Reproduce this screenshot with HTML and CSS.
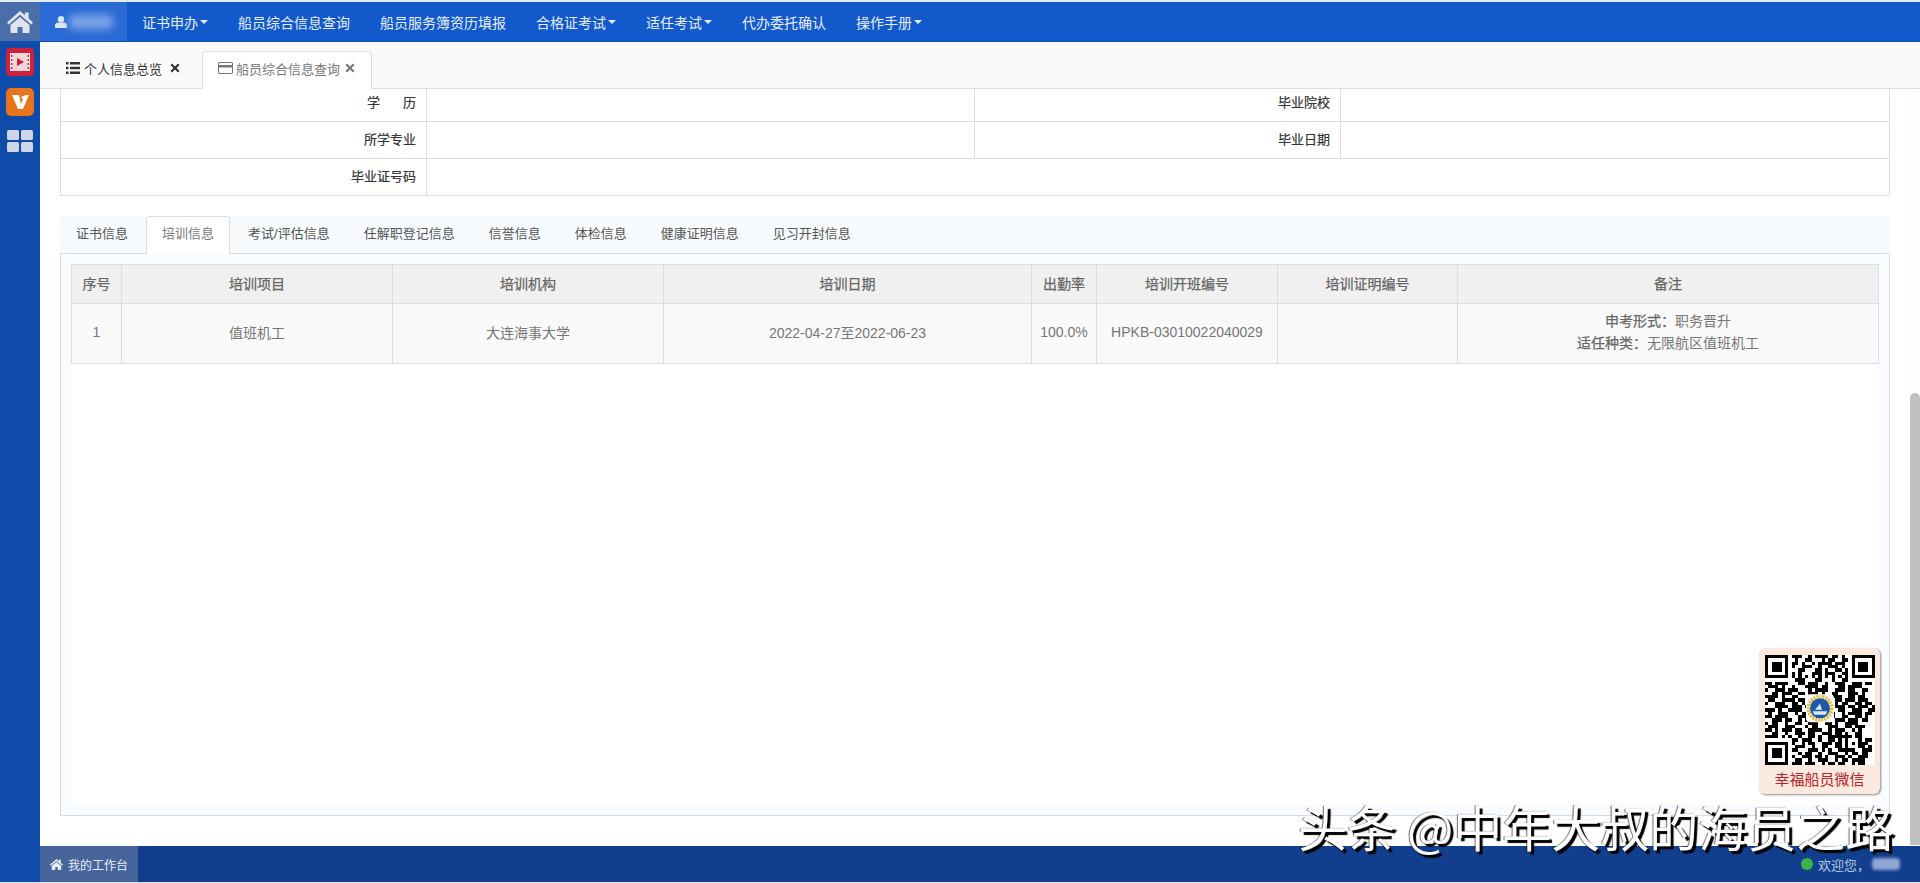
FILE: index.html
```html
<!DOCTYPE html>
<html lang="zh-CN">
<head>
<meta charset="utf-8">
<title>船员综合信息查询</title>
<link rel="stylesheet" href="styles.css">
</head>
<body>
<div class="app">
  <header class="topbar">
    <a class="home-btn"><svg class="home-ico" viewBox="0 0 26 22"><path d="M13 0 L18 4.2V1.5h3.6v6L26 11.4l-1.7 2L13 3.8 1.7 13.400 0 11.400z"/><path d="M13 6 L22.500 14v8h-7v-6h-5v6h-7v-8z"/></svg></a>
    <a class="user-btn"><svg class="user-ico" viewBox="0 0 12 12"><circle cx="6" cy="3.200" r="3.200"/><path d="M0 12V9.500C0 7.500 1.500 6.500 3 6.500h6c1.500 0 3 1 3 3V12z"/></svg><span class="blur-name"></span></a>
    <nav class="nav">
      <a class="nav-item">证书申办<i class="caret"></i></a>
      <a class="nav-item">船员综合信息查询</a>
      <a class="nav-item">船员服务簿资历填报</a>
      <a class="nav-item">合格证考试<i class="caret"></i></a>
      <a class="nav-item">适任考试<i class="caret"></i></a>
      <a class="nav-item">代办委托确认</a>
      <a class="nav-item">操作手册<i class="caret"></i></a>
    </nav>
  </header>
  <div class="body-row">
    <aside class="sidebar">
      <svg class="side-ico" viewBox="0 0 28 28"><rect width="28" height="28" rx="4" fill="#d0213c"/><rect x="4" y="5" width="20" height="18" fill="#f6e6e8"/><path d="M7 5h14v18H7z" fill="#f3d6da"/><path d="M11 10l7 4-7 4z" fill="#c4202f"/><path d="M5 7h1.500v2H5zM5 11h1.500v2H5zM5 15h1.500v2H5zM5 19h1.500v2H5zM21.500 7H23v2h-1.500zM21.500 11H23v2h-1.500zM21.500 15H23v2h-1.500zM21.500 19H23v2h-1.500z" fill="#c4202f"/></svg>
      <svg class="side-ico" viewBox="0 0 28 28"><rect width="28" height="28" rx="5" fill="#e8741c"/><path d="M6 7h7l2 9 2-5-2-2 5-2h3l-6 14h-5z" fill="#fff"/></svg>
      <svg class="side-grid" viewBox="0 0 26 22"><rect width="12" height="10" rx="1.500"/><rect x="14" width="12" height="10" rx="1.500"/><rect y="12" width="12" height="10" rx="1.500"/><rect x="14" y="12" width="12" height="10" rx="1.500"/></svg>
    </aside>
    <div class="main">
      <div class="page-tabs">
        <div class="page-tab">
          <svg class="tab-ico" viewBox="0 0 14 12"><path d="M0 0h2.500v2.500H0zM4 0h10v2.500H4zM0 4.700h2.500v2.500H0zM4 4.700h10v2.500H4zM0 9.400h2.500v2.500H0zM4 9.400h10v2.500H4z"/></svg>
          <span>个人信息总览</span>
          <svg class="tab-x" viewBox="0 0 10 10"><path d="M2 .5L5 3.500 8 .5 9.500 2 6.500 5l3 3L8 9.500l-3-3-3 3L.5 8l3-3-3-3z"/></svg>
        </div>
        <div class="page-tab active">
          <svg class="tab-ico card" viewBox="0 0 15 12"><path d="M1.500 0h12A1.500 1.500 0 0 1 15 1.500v9a1.500 1.500 0 0 1-1.500 1.500h-12A1.500 1.500 0 0 1 0 10.500v-9A1.500 1.500 0 0 1 1.500 0zM1 5.500V10.500c0 .3.200.5.500.5h12c.3 0 .5-.2.500-.5V5.500zM1 1.500V3h13V1.500c0-.3-.2-.5-.5-.5h-12c-.3 0-.5.200-.5.500z"/></svg>
          <span>船员综合信息查询</span>
          <svg class="tab-x" viewBox="0 0 10 10"><path d="M2 .5L5 3.500 8 .5 9.500 2 6.500 5l3 3L8 9.500l-3-3-3 3L.5 8l3-3-3-3z"/></svg>
        </div>
      </div>
      <div class="content">
        <table class="info">
          <colgroup><col class="c-label"><col class="c-val"><col class="c-label"><col></colgroup>
          <tr class="row-first"><th>学&emsp;&ensp;&nbsp;历</th><td></td><th>毕业院校</th><td></td></tr>
          <tr><th>所学专业</th><td></td><th>毕业日期</th><td></td></tr>
          <tr><th>毕业证号码</th><td colspan="3"></td></tr>
        </table>
        <div class="panel">
          <ul class="tabs">
            <li>证书信息</li>
            <li class="active">培训信息</li>
            <li>考试/评估信息</li>
            <li>任解职登记信息</li>
            <li>信誉信息</li>
            <li>体检信息</li>
            <li>健康证明信息</li>
            <li>见习开封信息</li>
          </ul>
          <div class="panel-body">
            <div class="panel-inner">
              <table class="data">
                <colgroup><col class="d1"><col class="d2"><col class="d2"><col class="d4"><col class="d5"><col class="d6"><col class="d7"><col></colgroup>
                <thead><tr><th>序号</th><th>培训项目</th><th>培训机构</th><th>培训日期</th><th>出勤率</th><th>培训开班编号</th><th>培训证明编号</th><th>备注</th></tr></thead>
                <tbody><tr><td>1</td><td>值班机工</td><td>大连海事大学</td><td>2022-04-27至2022-06-23</td><td>100.0%</td><td>HPKB-03010022040029</td><td></td><td class="remark"><b>申考形式：</b>职务晋升<br><b>适任种类：</b>无限航区值班机工</td></tr></tbody>
              </table>
            </div>
          </div>
        </div>
        <div class="scrollbar"><div class="thumb"></div></div>
      </div>
      <footer class="footer">
        <div class="work-tab"><svg class="work-ico" viewBox="0 0 26 22"><path d="M13 0 L18 4.200V1.500h3.600v6L26 11.400l-1.700 2L13 3.800 1.700 13.400 0 11.400z"/><path d="M13 6 L22.500 14v8h-7v-6h-5v6h-7v-8z"/></svg><span>我的工作台</span></div>
        <div class="status"><i class="dot"></i><span>欢迎您，</span><span class="blur-name small"></span></div>
      </footer>
    </div>
  </div>
  <div class="bottom-strip"></div>

  <div class="qr-card">
    <svg class="qr" viewBox="0 0 33 33" shape-rendering="crispEdges">
      <path fill-rule="evenodd" d="M0 0h7v7H0zM1 1v5h5V1zM2 2h3v3H2zM26 0h7v7h-7zM27 1v5h5V1zM28 2h3v3h-3zM0 26h7v7H0zM1 27v5h5v-5zM2 28h3v3H2z"/>
      <path stroke="#000" stroke-width="1" fill="none" d="M8 .5h3m2 0h1m1 0h4m1 0h2m1 0h1
M9 1.500h1m2 0h2m3 0h1m1 0h2m2 0h2
M8 2.500h2m1 0h1m2 0h1m1 0h4m1 0h3
M8 3.500h1m2 0h3m2 0h1m2 0h3m1 0h1
M10 4.500h2m3 0h2m1 0h1m2 0h2m1 0h1
M8 5.500h1m1 0h1m3 0h3m1 0h3m2 0h2
M8 6.500h1m1 0h1m1 0h1m1 0h1m1 0h1m1 0h1m1 0h1m1 0h1m1 0h1
M9 7.500h3m3 0h2m3 0h1m2 0h2
M0 8.500h2m1 0h4m3 0h2m1 0h3m2 0h1m2 0h3m2 0h3m1 0h2
M1 9.500h3m1 0h1m2 0h1m3 0h4m1 0h2m3 0h2m1 0h4
M0 10.500h1m2 0h3m1 0h3m3 0h1m1 0h4m2 0h3m1 0h2m2 0h2
M2 11.500h2m1 0h3m2 0h2m1 0h3m1 0h1m2 0h2m3 0h3m1 0h1
M0 12.500h4m1 0h1m2 0h2m3 0h3m3 0h4m2 0h2m1 0h2
M1 13.500h2m2 0h4m1 0h2m9 0h2m1 0h3m1 0h3
M0 14.500h1m2 0h3m2 0h2m1 0h1m9 0h1m1 0h2m2 0h2m1 0h2
M3 15.500h4m1 0h3m1 0h1m8 0h3m1 0h2m1 0h3m1 0h1
M0 16.500h3m1 0h1m2 0h4m2 0h1m8 0h2m2 0h3m2 0h2
M1 17.500h1m2 0h3m2 0h1m1 0h2m7 0h1m2 0h1m1 0h4m1 0h2
M0 18.500h2m1 0h4m3 0h3m5 0h3m2 0h2m2 0h2m1 0h1
M2 19.500h3m1 0h2m2 0h1m1 0h2m2 0h4m1 0h3m1 0h3m1 0h2
M0 20.500h1m1 0h2m2 0h1m2 0h2m2 0h3m2 0h2m1 0h1m2 0h4
M1 21.500h3m2 0h3m3 0h1m1 0h2m3 0h3m2 0h2m1 0h3
M0 22.500h2m1 0h1m1 0h3m1 0h2m2 0h4m2 0h1m1 0h3m2 0h1m1 0h1
M2 23.500h2m2 0h1m2 0h3m1 0h2m2 0h3m1 0h2m1 0h1m2 0h2
M0 24.500h4m1 0h1m1 0h1m2 0h1m2 0h2m1 0h1m2 0h7m1 0h2
M8 25.500h2m1 0h3m2 0h1m2 0h2m1 0h1m1 0h1m3 0h1m1 0h2
M8 26.500h1m2 0h1m1 0h2m2 0h3m1 0h2m1 0h1m1 0h1m1 0h3
M9 27.500h3m2 0h1m2 0h2m2 0h2m1 0h1m3 0h2m1 0h1
M8 28.500h2m3 0h3m1 0h1m1 0h1m2 0h5m2 0h3
M10 29.500h1m1 0h2m2 0h1m2 0h3m2 0h1m1 0h2m1 0h2
M8 30.500h1m2 0h3m1 0h2m1 0h1m2 0h3m1 0h1m2 0h3
M9 31.500h2m2 0h1m2 0h3m2 0h1m1 0h2m1 0h4
M8 32.500h3m1 0h3m2 0h1m1 0h2m1 0h2m2 0h1m1 0h2"/>
      <g shape-rendering="auto">
        <rect x="12.300" y="11.800" width="8.400" height="8.400" rx="1.200" fill="#fff"/>
        <circle cx="16.500" cy="16" r="3.500" fill="none" stroke="#e4b93e" stroke-width="1.100" stroke-dasharray=".6 .3"/>
        <circle cx="16.500" cy="16" r="3" fill="#1d5aa8"/>
        <path d="M15 16.400l1.500-1.800 .6 1.800zM14.300 16.900h4.400l-.5 1h-3.400z" fill="#dfe8f2"/>
      </g>
    </svg>
    <div class="qr-label">幸福船员微信</div>
  </div>
  <div class="watermark">头条 @中年大叔的海员之路</div>
</div>
</body>
</html>
```
FILE: styles.css
```css
* { box-sizing: border-box; }
html, body { margin: 0; padding: 0; height: 100%; overflow: hidden; }
body {
  font-family: "Liberation Sans", "Noto Sans CJK SC", sans-serif;
  font-size: 13px;
  color: #333;
  background: #fff;
}
.app {
  position: relative;
  display: flex;
  flex-direction: column;
  height: 883px;
  padding-top: 2px;
  background: #e4ecf8;
}

/* top bar */
.topbar {
  display: flex;
  height: 40px;
  flex: none;
  background: #1259cc;
  border-bottom: 1px solid #0f4fb4;
}
.home-btn {
  display: flex;
  align-items: center;
  justify-content: center;
  width: 40px;
  background: #4a6ea9;
}
.home-ico { width: 26px; height: 22px; fill: #dfe4ee; }
.user-btn {
  display: flex;
  align-items: center;
  width: 87px;
  padding-left: 15px;
  background: #2a6ad4;
}
.user-ico { width: 12px; height: 12px; fill: #dfe7f6; flex: none; }
.blur-name {
  display: block;
  width: 44px;
  height: 14px;
  margin-left: 2px;
  background: #7fa6ea;
  border-radius: 4px;
  filter: blur(4px);
}
.nav { display: flex; }
.nav-item {
  display: flex;
  align-items: center;
  padding: 0 15px;
  color: #e8eef9;
  font-size: 14px;
  white-space: nowrap;
}
.caret {
  display: block;
  margin-left: 2px;
  border-top: 4px solid #e8eef9;
  border-left: 4px solid transparent;
  border-right: 4px solid transparent;
  margin-top: 1px;
}

/* body */
.body-row { display: flex; flex: 1; min-height: 0; }
.sidebar {
  display: flex;
  flex-direction: column;
  align-items: center;
  flex: none;
  width: 40px;
  padding-top: 6px;
  background: #0f4ba8;
}
.side-ico { display: block; width: 28px; height: 28px; margin-bottom: 12px; }
.side-grid { display: block; width: 26px; height: 22px; margin-top: 2px; fill: #cdd6e8; }
.main { display: flex; flex-direction: column; flex: 1; min-width: 0; background: #fff; }

/* page tabs */
.page-tabs {
  display: flex;
  align-items: flex-end;
  flex: none;
  height: 47px;
  padding-left: 10px;
  background: #fafafa;
  border-bottom: 1px solid #ddd;
}
.page-tab {
  display: flex;
  align-items: center;
  height: 37px;
  margin-bottom: -1px;
  padding: 0 21px 5px 15px;
  color: #333;
  border: 1px solid transparent;
  white-space: nowrap;
}
.page-tab.active {
  height: 38px;
  padding: 0 16px 4px 15px;
  color: #777;
  background: #fff;
  border-color: #ddd #ddd #fff;
  border-radius: 4px 4px 0 0;
}
.tab-ico { width: 14px; height: 12px; margin-right: 4px; fill: #333; flex: none; }
.tab-ico.card { width: 15px; margin-right: 3px; fill: #777; }
.tab-x { width: 10px; height: 10px; margin-left: 8px; fill: #333; flex: none; }
.active .tab-x { margin-left: 5px; fill: #777; }

/* content */
.content {
  position: relative;
  display: flex;
  flex-direction: column;
  flex: 1;
  min-height: 0;
  padding: 0 30px 30px 20px;
}
.info {
  flex: none;
  width: 100%;
  table-layout: fixed;
  border-collapse: collapse;
}
.info th, .info td {
  height: 37px;
  padding: 0 10px 3px;
  border: 1px solid #ddd;
  font-weight: 400;
}
.info .row-first th, .info .row-first td { height: 32px; padding-bottom: 6px; border-top: 0; }
.info th { text-align: right; color: #333; -webkit-text-stroke: .2px #333; }
.c-label { width: 366px; }
.c-val { width: 548px; }

.panel { display: flex; flex-direction: column; flex: 1; min-height: 0; margin-top: 20px; }
.tabs {
  display: flex;
  flex: none;
  height: 38px;
  margin: 0;
  padding: 0;
  list-style: none;
  background: #f7fbfe;
  border-bottom: 1px solid #ddd;
}
.tabs li {
  height: 38px;
  padding: 0 15px;
  line-height: 33px;
  margin-right: 2px;
  color: #555;
  border: 1px solid transparent;
  white-space: nowrap;
}
.tabs li.active {
  color: #777;
  background: #fff;
  border-color: #ddd #ddd #fff;
  border-radius: 4px 4px 0 0;
}
.panel-body {
  flex: 1;
  min-height: 0;
  padding: 10px;
  background: #f8fbff;
  border: 1px solid #ddd;
  border-top: 0;
}
.panel-inner { height: 100%; background: #fff; }
.data {
  width: 100%;
  table-layout: fixed;
  border-collapse: collapse;
  text-align: center;
  font-size: 14px;
  color: #777;
}
.data th, .data td { border: 1px solid #ddd; padding: 0 0 2px; }
.data th {
  height: 39px;
  color: #666;
  background: #f0f0f0;
  font-weight: 400;
  -webkit-text-stroke: .25px #666;
}
.data td { height: 60px; background: #f9f9f9; }
.data .remark { line-height: 22px; padding-bottom: 3px; }
.data .remark b { color: #666; font-weight: 400; -webkit-text-stroke: .25px #666; }
.d1 { width: 50px; }
.d2 { width: 271px; }
.d4 { width: 368px; }
.d5 { width: 65px; }
.d6 { width: 181px; }
.d7 { width: 180px; }

.scrollbar {
  position: absolute;
  top: 0;
  right: 0;
  bottom: 0;
  width: 10px;
  background: #fdfdfd;
}
.thumb {
  position: absolute;
  left: 0;
  right: 0;
  top: 304px;
  bottom: 1px;
  background: #c1c1c1;
  border-radius: 5px 5px 0 0;
}

/* footer */
.footer {
  display: flex;
  justify-content: space-between;
  align-items: center;
  flex: none;
  height: 36px;
  background: #123e8e;
}
.work-tab {
  display: flex;
  align-items: center;
  width: 98px;
  height: 100%;
  padding-left: 10px;
  color: #e8edf6;
  font-size: 12px;
  background: #47659a;
}
.work-ico { width: 13px; height: 11px; margin-right: 5px; fill: #e8edf6; }
.status { display: flex; align-items: center; padding-right: 20px; color: #b9c8e2; font-size: 13px; }
.dot { width: 12px; height: 12px; margin-right: 5px; border-radius: 50%; background: #3cb44a; }
.blur-name.small { width: 28px; height: 12px; margin-left: 2px; background: #8da6d2; filter: blur(1.500px); }
.bottom-strip { flex: none; height: 1px; background: #d6e6f5; }

/* overlays */
.qr-card {
  position: absolute;
  left: 1759px;
  top: 648px;
  width: 121px;
  height: 146px;
  padding: 7px 6px 0;
  background: #fae9de;
  border-radius: 6px;
  box-shadow: 1px 1px 2px rgba(0, 0, 0, .45);
}
.qr { display: block; width: 110px; height: 110px; background: #fff; }
.qr-label { margin-top: 6px; text-align: center; color: #b8232a; font-size: 15px; line-height: 18px; white-space: nowrap; }
.watermark {
  position: absolute;
  left: 1298px;
  top: 802px;
  color: #fff;
  font-family: "Noto Sans CJK SC", sans-serif;
  font-size: 49px;
  line-height: 48px;
  white-space: nowrap;
  text-shadow: 3px 3px 1px #000, -1px 0 1px rgba(0,0,0,.6);
}
```
